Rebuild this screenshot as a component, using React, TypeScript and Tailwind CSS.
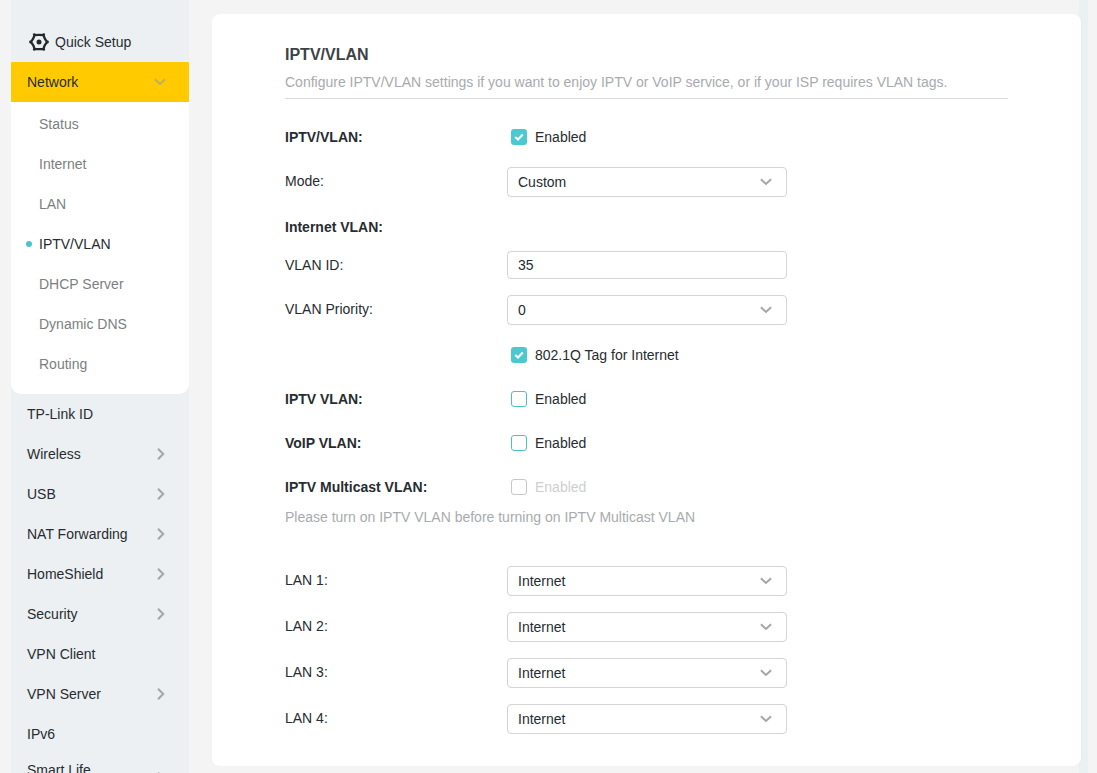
import { useState } from "react";

const SUB_ITEMS = ["Status", "Internet", "LAN", "IPTV/VLAN", "DHCP Server", "Dynamic DNS", "Routing"];

const MENU_ITEMS = [
  { label: "TP-Link ID", expandable: false },
  { label: "Wireless", expandable: true },
  { label: "USB", expandable: true },
  { label: "NAT Forwarding", expandable: true },
  { label: "HomeShield", expandable: true },
  { label: "Security", expandable: true },
  { label: "VPN Client", expandable: false },
  { label: "VPN Server", expandable: true },
  { label: "IPv6", expandable: false },
];

const LAN_PORTS = ["LAN 1:", "LAN 2:", "LAN 3:", "LAN 4:"];

function ChevronDown({ className }: { className: string }) {
  return (
    <svg className={className} width="12" height="8" viewBox="0 0 12 8" fill="none" stroke="currentColor" strokeWidth="2">
      <path d="M0.9 1.3 6 6 11.1 1.3" />
    </svg>
  );
}

function ChevronRight() {
  return (
    <svg className="text-[#a3a8aa]" width="8" height="12" viewBox="0 0 8 12" fill="none" stroke="currentColor" strokeWidth="2.1">
      <path d="M1 0.8 6.2 6 1 11.2" />
    </svg>
  );
}

function SetupIcon() {
  return (
    <svg width="20" height="18" viewBox="0 0 20 18" fill="none">
      <path
        d="M5.6 2.2Q10 1.6 14.4 2.2Q15.6 6.2 18 9Q15.6 11.8 14.4 15.8Q10 16.4 5.6 15.8Q4.4 11.8 2 9Q4.4 6.2 5.6 2.2Z"
        stroke="#23282b"
        strokeWidth="2.3"
        strokeLinejoin="round"
      />
      <g fill="#23282b">
        <circle cx="5.3" cy="1.6" r="1.4" />
        <circle cx="14.7" cy="1.6" r="1.4" />
        <circle cx="18.5" cy="9" r="1.4" />
        <circle cx="14.7" cy="16.4" r="1.4" />
        <circle cx="5.3" cy="16.4" r="1.4" />
        <circle cx="1.5" cy="9" r="1.4" />
        <circle cx="10" cy="9" r="2.5" />
      </g>
    </svg>
  );
}

function Sidebar() {
  return (
    <nav className="ml-[11px] h-[773px] w-[178px] shrink-0 overflow-hidden bg-[#ecf0f3] pt-[22px]">
      <div className="flex h-10 items-center gap-[6px] pl-[18px]">
        <SetupIcon />
        <span>Quick Setup</span>
      </div>
      <div className="flex h-10 items-center justify-between rounded-[1px] bg-[#ffcb00] pl-4 pr-[23px]">
        <span>Network</span>
        <ChevronDown className="text-[#bcae66]" />
      </div>
      <ul className="h-[292px] rounded-b-[10px] bg-white pt-[2px]">
        {SUB_ITEMS.map((item) => (
          <li key={item} className="flex h-10 items-center pl-[15px]">
            {item === "IPTV/VLAN" ? (
              <>
                <span className="mr-[7px] size-[6px] rounded-full bg-[#4ac4d3]" />
                <span>{item}</span>
              </>
            ) : (
              <span className="pl-[13px] text-[#7b7f81]">{item}</span>
            )}
          </li>
        ))}
      </ul>
      {MENU_ITEMS.map((item) => (
        <div key={item.label} className="flex h-10 items-center justify-between pl-4 pr-6">
          <span>{item.label}</span>
          {item.expandable && <ChevronRight />}
        </div>
      ))}
      <div className="flex justify-between pl-4 pr-6 pt-[6px]">
        <span>Smart Life</span>
        <span className="mt-[12px]">
          <ChevronRight />
        </span>
      </div>
    </nav>
  );
}

function Select({ value }: { value: string }) {
  return (
    <button type="button" className="flex h-[30px] w-[280px] items-center justify-between rounded-[4px] border border-[#d2d4d5] bg-white pl-[10px] pr-[14px]">
      <span>{value}</span>
      <ChevronDown className="text-[#a4a7a9]" />
    </button>
  );
}

function Checkbox({ label, initial = false, disabled = false }: { label: string; initial?: boolean; disabled?: boolean }) {
  const [checked, setChecked] = useState(initial);
  const box = checked
    ? "bg-[#4bc8d0]"
    : disabled
      ? "border border-[#c6c8ca]"
      : "border border-[#4fbfc2]";
  return (
    <button
      type="button"
      role="checkbox"
      aria-checked={checked}
      disabled={disabled}
      onClick={() => setChecked(!checked)}
      className={`flex items-center gap-2 pl-1 ${disabled ? "text-[#cdcfd0]" : ""}`}
    >
      <span className={`flex size-4 items-center justify-center rounded-[3px] ${box}`}>
        {checked && (
          <svg width="10" height="8" viewBox="0 0 10 8" fill="none" stroke="white" strokeWidth="2.2">
            <path d="M1.2 4 4 6.4 8.8 1.4" />
          </svg>
        )}
      </span>
      <span>{label}</span>
    </button>
  );
}

function Label({ text, bold = false }: { text: string; bold?: boolean }) {
  return <span className={`w-[222px] shrink-0 ${bold ? "font-bold" : ""}`}>{text}</span>;
}

function SelectRow({ label, value }: { label: string; value: string }) {
  return (
    <div className="flex h-[30px] items-start">
      <span className="w-[222px] shrink-0 pt-1">{label}</span>
      <Select value={value} />
    </div>
  );
}

export default function App() {
  return (
    <div className="flex h-[773px] w-[1097px] overflow-hidden bg-[#f4f4f4] font-['Liberation_Sans',Arial,sans-serif] text-[14px] leading-5 text-[#272c30]">
      <Sidebar />
      <div className="ml-[23px] h-[773px] w-[876px] bg-linear-to-r from-[#f4f4f4] from-99% to-[#eaf1f0] to-99% pt-[14px]">
        <main className="h-[752px] w-[869px] rounded-[8px] bg-white pl-[73px] pt-[31px] shadow-[1px_0_1px_#e3eeec]">
          <h1 className="text-[16px] font-bold leading-5 text-[#3c4346]">IPTV/VLAN</h1>
          <p className="mt-[7px] h-[27px] w-[723px] border-b border-[#d8dadb] text-[#a8abad]">
            Configure IPTV/VLAN settings if you want to enjoy IPTV or VoIP service, or if your ISP requires VLAN tags.
          </p>
          <div className="mt-7 flex h-5 items-center">
            <Label text="IPTV/VLAN:" bold />
            <Checkbox label="Enabled" initial />
          </div>
          <div className="mt-5">
            <SelectRow label="Mode:" value="Custom" />
          </div>
          <h2 className="mt-5 font-bold">Internet VLAN:</h2>
          <div className="mt-[14px] flex h-7 items-center">
            <Label text="VLAN ID:" />
            <input
              defaultValue="35"
              className="h-7 w-[280px] rounded-[4px] border border-[#d2d4d5] bg-white px-[10px] outline-none"
            />
          </div>
          <div className="mt-4">
            <SelectRow label="VLAN Priority:" value="0" />
          </div>
          <div className="mt-5 flex h-5 items-center pl-[222px]">
            <Checkbox label="802.1Q Tag for Internet" initial />
          </div>
          <div className="mt-6 flex h-5 items-center">
            <Label text="IPTV VLAN:" bold />
            <Checkbox label="Enabled" />
          </div>
          <div className="mt-6 flex h-5 items-center">
            <Label text="VoIP VLAN:" bold />
            <Checkbox label="Enabled" />
          </div>
          <div className="mt-6 flex h-5 items-center">
            <Label text="IPTV Multicast VLAN:" bold />
            <Checkbox label="Enabled" disabled />
          </div>
          <p className="mt-[10px] text-[#a8abad]">Please turn on IPTV VLAN before turning on IPTV Multicast VLAN</p>
          <div className="mt-[39px] flex flex-col gap-4">
            {LAN_PORTS.map((port) => (
              <SelectRow key={port} label={port} value="Internet" />
            ))}
          </div>
        </main>
      </div>
    </div>
  );
}
